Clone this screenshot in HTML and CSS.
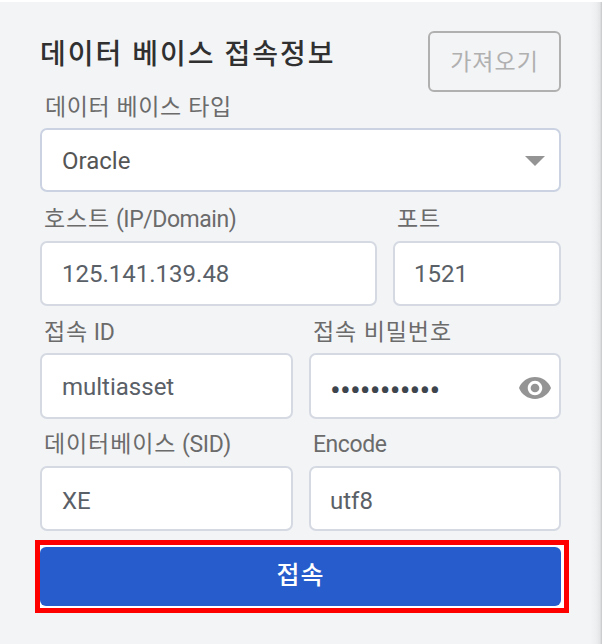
FILE: index.html
```html
<!DOCTYPE html>
<html lang="ko">
<head>
<meta charset="utf-8">
<title>데이터 베이스 접속정보</title>
<link rel="stylesheet" href="styles.css">
</head>
<body>
<main class="panel">
  <header class="header">
    <h1 class="title">데이터 베이스 접속정보</h1>
    <button class="import" type="button">가져오기</button>
  </header>
  <section class="field type">
    <div class="label type-label">데이터 베이스 타입</div>
    <div class="box select"><span>Oracle</span>
      <svg class="caret" viewBox="0 0 20 10"><path d="M0 0h20L10 10z"/></svg>
    </div>
  </section>
  <div class="row host">
    <section class="field">
      <div class="label"><span class="ko">호스트</span> <span class="latin">(IP/Domain)</span></div>
      <div class="box"><span>125.141.139.48</span></div>
    </section>
    <section class="field">
      <div class="label ko">포트</div>
      <div class="box port"><span>1521</span></div>
    </section>
  </div>
  <div class="row account">
    <section class="field">
      <div class="label"><span class="ko">접속</span> <span class="latin">ID</span></div>
      <div class="box"><span>multiasset</span></div>
    </section>
    <section class="field">
      <div class="label ko">접속 비밀번호</div>
      <div class="box password"><span class="dots">•••••••••••</span>
        <svg class="eye" viewBox="1 4.5 22 15"><path fill-rule="evenodd" d="M12 4.5C7 4.5 2.73 7.61 1 12c1.73 4.39 6 7.5 11 7.5s9.27-3.11 11-7.5c-1.73-4.39-6-7.5-11-7.5zM12 17c-2.76 0-5-2.24-5-5s2.24-5 5-5 5 2.24 5 5-2.24 5-5 5zm0-8c-1.66 0-3 1.34-3 3s1.34 3 3 3 3-1.34 3-3-1.34-3-3-3z"/></svg>
      </div>
    </section>
  </div>
  <div class="row database">
    <section class="field">
      <div class="label"><span class="ko">데이터베이스</span> <span class="sid">(SID)</span></div>
      <div class="box"><span>XE</span></div>
    </section>
    <section class="field">
      <div class="label latin">Encode</div>
      <div class="box encode"><span>utf8</span></div>
    </section>
  </div>
  <div class="highlight"><button class="connect" type="button">접속</button></div>
</main>
</body>
</html>
```
FILE: styles.css
```css
* { box-sizing: border-box; }
body {
  margin: 0;
  background: #f3f4f6;
  font-family: Roboto, "Noto Sans CJK KR", sans-serif;
}
.panel {
  height: 644px;
  padding: 0 41px 0 40px;
  border-top: 2px solid #fff;
  background: linear-gradient(to right, #f3f4f6 0, #f3f4f6 590px, #eeeff1 596px, #e4e5e7 600px, #c4c5c7 602px);
  overflow: hidden;
}
.header {
  height: 92px;
  display: flex;
  justify-content: space-between;
  align-items: flex-start;
  padding-top: 29px;
}
.title {
  margin: 0;
  padding-top: 3px;
  font-size: 28px;
  line-height: 42px;
  font-weight: 500;
  letter-spacing: 2px;
  color: #303030;
  white-space: nowrap;
}
.import {
  width: 133px;
  height: 61px;
  padding: 0 0 4px;
  border: 2px solid #b0b0b0;
  border-radius: 6px;
  background: transparent;
  font: 400 23px "Noto Sans CJK KR", sans-serif;
  letter-spacing: 1px;
  color: #b0b0b0;
}
.label {
  height: 35px;
  padding-left: 4px;
  font-size: 23px;
  line-height: 28px;
  color: #6b6b6b;
  white-space: nowrap;
}
.type-label {
  height: 34px;
  padding-left: 5px;
  letter-spacing: .6px;
}
.ko { letter-spacing: .9px; }
.latin { letter-spacing: -.45px; }
.sid { letter-spacing: -.4px; }
.box {
  height: 65px;
  display: flex;
  align-items: center;
  padding: 0 20px;
  border: 2px solid #d5d9e2;
  border-radius: 7px;
  background: #fff;
  font-size: 24px;
  color: #5a6067;
}
.select {
  height: 64px;
  padding-top: 1px;
  justify-content: space-between;
  padding-right: 14px;
  border-color: #cbd3e2;
  color: #555;
}
.port { padding-left: 19px; }
.caret { width: 20px; height: 10px; fill: #949494; }
.row { display: grid; column-gap: 16px; }
.host { grid-template-columns: 337px 168px; margin-top: 14px; }
.account, .database { grid-template-columns: 253px 252px; }
.account { margin-top: 13px; }
.account .label { height: 34px; }
.account .box { height: 66px; padding-top: 2px; }
.database { margin-top: 12px; }
.database .box { padding: 4px 20px 0; }
.database .encode { padding-left: 19px; }
.account .password { justify-content: space-between; padding: 3px 8px 0 19px; }
.dots {
  padding-top: 5px;
  font-size: 32px;
  line-height: 30px;
  letter-spacing: -.85px;
  color: #3d444c;
}
.eye { width: 32px; height: 22px; fill: #949494; }
.highlight {
  width: 534px;
  height: 73px;
  margin: 9px 0 0 -5px;
  padding: 2px 3px 2px 0;
  border: 5px solid #f00;
  background: #fff;
}
.connect {
  width: 100%;
  height: 59px;
  display: block;
  padding: 0 0 8px;
  border: 0;
  border-radius: 6px;
  background: #265ccb;
  font: 500 25px "Noto Sans CJK KR", sans-serif;
  letter-spacing: 1px;
  color: #fff;
}
```
